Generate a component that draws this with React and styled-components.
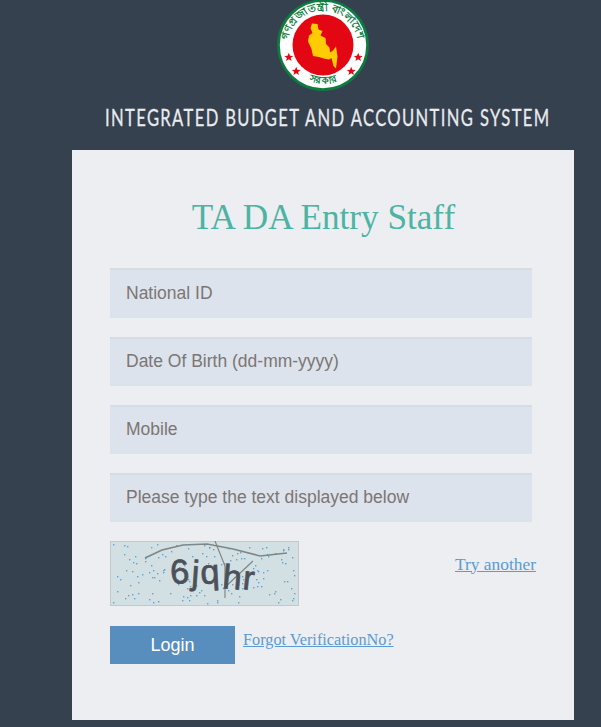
import React from 'react';
import styled, { createGlobalStyle } from 'styled-components';

const GlobalStyle = createGlobalStyle`
  html, body {
    margin: 0;
    padding: 0;
    background: #364150;
  }
`;

const Page = styled.div`
  width: 601px;
  height: 727px;
  overflow: hidden;
  background: #364150;
  display: flex;
  flex-direction: column;
`;

const Header = styled.header`
  height: 150px;
  display: flex;
  flex-direction: column;
  align-items: center;
  padding-left: 44px;
  box-sizing: border-box;
`;

const Emblem = styled.svg`
  display: block;
  width: 94px;
  height: 94px;
  margin-bottom: 10px;
`;

const SystemName = styled.div`
  width: 444px;
  margin-left: 9px;
  font-family: 'Lato', 'Liberation Sans', sans-serif;
  font-size: 24px;
  line-height: 26px;
  letter-spacing: 2px;
  color: #e9ebee;
  -webkit-text-stroke: 0.3px #e9ebee;
  white-space: nowrap;
  transform: scaleX(0.69);
  transform-origin: left center;
`;

const Card = styled.main`
  width: 502px;
  height: 570px;
  margin-left: 72px;
  padding: 46px 42px 0 38px;
  box-sizing: border-box;
  background: #eceef2;
`;

const Title = styled.h1`
  margin: 0 0 29px;
  padding-left: 5px;
  font-family: 'Liberation Serif', serif;
  font-size: 35.2px;
  line-height: 43px;
  font-weight: 400;
  text-align: center;
  color: #4db3a2;
`;

const Fields = styled.div`
  display: flex;
  flex-direction: column;
  gap: 19px;
`;

const Input = styled.input`
  width: 100%;
  height: 49px;
  box-sizing: border-box;
  padding: 0 16px 2px;
  border: 0;
  border-top: 2px solid #d6dce6;
  background: #dde3ec;
  font-family: 'Liberation Sans', sans-serif;
  font-size: 17.5px;
  color: #555;
  outline: none;
  &:first-child {
    height: 50px;
  }
  &::placeholder {
    color: #7b7674;
    opacity: 1;
  }
`;

const CaptchaRow = styled.div`
  display: flex;
  align-items: center;
  justify-content: space-between;
  margin-top: 19px;
  margin-right: -4px;
`;

const Captcha = styled.svg`
  display: block;
  width: 189px;
  height: 65px;
`;

const TextLink = styled.a`
  font-family: 'Liberation Serif', serif;
  font-size: ${(p) => p.$size}px;
  color: #5b9bd1;
  text-decoration: underline;
  white-space: nowrap;
`;

const TryLink = styled(TextLink)`
  margin-bottom: 19px;
`;

const Actions = styled.div`
  display: flex;
  align-items: flex-start;
  gap: 8px;
  margin-top: 20px;
`;

const LoginButton = styled.button`
  width: 125px;
  height: 38px;
  border: 0;
  padding: 0;
  background: #578ebe;
  color: #fff;
  font-family: 'Liberation Sans', sans-serif;
  font-size: 18px;
`;

const ForgotLink = styled(TextLink)`
  line-height: 18px;
  margin-top: 5px;
`;

const speckles = Array.from({ length: 150 }, (_, i) => ({
  x: 3 + ((i * 73 + (i * i) % 29) % 183),
  y: 3 + ((i * 41 + (i * i * 3) % 17) % 60),
}));

const starPoints = '0,-4.6 1.2,-1.5 4.4,-1.4 1.9,0.6 2.8,3.8 0,2 -2.8,3.8 -1.9,0.6 -4.4,-1.4 -1.2,-1.5';

function BangladeshEmblem() {
  return (
    <Emblem viewBox="0 0 94 94">
      <defs>
        <path id="emblem-top" d="M12.5 49A34.7 34.7 0 1 1 81.5 49" />
        <path id="emblem-bottom" d="M28 79A39 39 0 0 0 66 79" />
      </defs>
      <circle cx="47" cy="45" r="44.5" fill="#fff" stroke="#0d7d3f" strokeWidth="2.6" />
      <circle cx="47" cy="45" r="30.5" fill="#e30613" />
      <path
        d="M36 23.5 41.5 24 42.5 29.5 46.5 31 44.5 35.5 49.5 38 50 44 53.5 47.5 54 52.5 57 50.5 60 46.5 61.5 56.5 60 68.5 57.5 66 55.5 58 53 59.5 47.8 58.5 42.8 57 37 56 35.5 49 32 41.5 33 35.5 36.5 33 34.5 28.3Z"
        fill="#ffcb05"
      />
      <text fontFamily="'Noto Sans', sans-serif" fontSize="10.5" fontWeight="700" fill="#0d7d3f">
        <textPath href="#emblem-top" startOffset="50%" textAnchor="middle">
          গণপ্রজাতন্ত্রী বাংলাদেশ
        </textPath>
      </text>
      <text fontFamily="'Noto Sans', sans-serif" fontSize="10" fontWeight="700" fill="#0d7d3f">
        <textPath href="#emblem-bottom" startOffset="50%" textAnchor="middle">
          সরকার
        </textPath>
      </text>
      <polygon points={starPoints} transform="translate(12.8 57.3)" fill="#e30613" />
      <polygon points={starPoints} transform="translate(20.2 71.3)" fill="#e30613" />
      <polygon points={starPoints} transform="translate(82.2 57.3)" fill="#e30613" />
      <polygon points={starPoints} transform="translate(75.2 71.3)" fill="#e30613" />
    </Emblem>
  );
}

function CaptchaImage() {
  return (
    <Captcha viewBox="0 0 189 65">
      <rect x="0.5" y="0.5" width="188" height="64" fill="#d3e0e3" stroke="#c4c8c9" />
      {speckles.map((s, i) => (
        <rect key={i} x={s.x} y={s.y} width="1.4" height="1.4" fill="#4a94c9" opacity="0.8" />
      ))}
      <path d="M35 17 52 9 73 4 97 3 123 8 150 15 177 12" fill="none" stroke="#7d8788" strokeWidth="1.7" />
      <path d="M105 0 115 25 115 57M113 48 143 20" fill="none" stroke="#7d8788" strokeWidth="1.2" />
      <text
        x="61 81 91 112 132"
        y="43 43 43 47 48"
        rotate="-4 4 -3 5 6"
        fontFamily="'Liberation Sans', sans-serif"
        fontSize="34"
        fill="#4c5159"
        stroke="#4c5159"
        strokeWidth="0.8"
      >
        6jqhr
      </text>
    </Captcha>
  );
}

export default function App() {
  return (
    <Page>
      <GlobalStyle />
      <Header>
        <BangladeshEmblem />
        <SystemName>INTEGRATED BUDGET AND ACCOUNTING SYSTEM</SystemName>
      </Header>
      <Card>
        <Title>TA DA Entry Staff</Title>
        <Fields>
          <Input placeholder="National ID" />
          <Input placeholder="Date Of Birth (dd-mm-yyyy)" />
          <Input placeholder="Mobile" />
          <Input placeholder="Please type the text displayed below" />
        </Fields>
        <CaptchaRow>
          <CaptchaImage />
          <TryLink href="#" $size={17.4}>Try another</TryLink>
        </CaptchaRow>
        <Actions>
          <LoginButton type="button">Login</LoginButton>
          <ForgotLink href="#" $size={16.25}>Forgot VerificationNo?</ForgotLink>
        </Actions>
      </Card>
    </Page>
  );
}
